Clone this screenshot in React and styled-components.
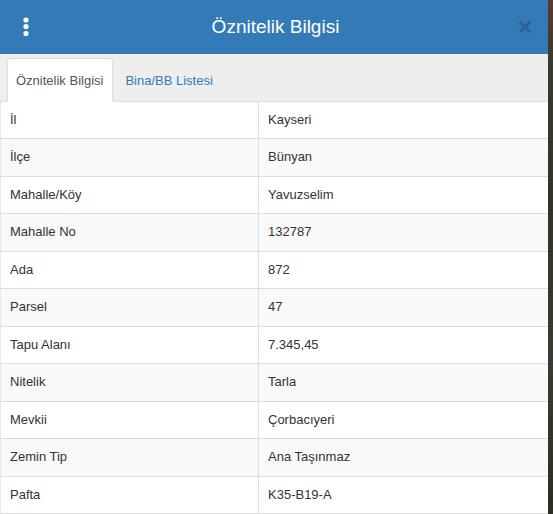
import React, { useState } from 'react'
import styled, { createGlobalStyle } from 'styled-components'

const rows = [
    ['İl', 'Kayseri'],
    ['İlçe', 'Bünyan'],
    ['Mahalle/Köy', 'Yavuzselim'],
    ['Mahalle No', '132787'],
    ['Ada', '872'],
    ['Parsel', '47'],
    ['Tapu Alanı', '7.345,45'],
    ['Nitelik', 'Tarla'],
    ['Mevkii', 'Çorbacıyeri'],
    ['Zemin Tip', 'Ana Taşınmaz'],
    ['Pafta', 'K35-B19-A'],
]

export default function App() {
    const [tab, setTab] = useState(0)

    return (
        <>
            <GlobalStyle />
            <Screen>
                <Panel>
                    <Header>
                        <MenuButton aria-label="menu">
                            <svg width="8" height="20" viewBox="0 0 8 20">
                                <circle cx="4" cy="3" r="2.6" fill="#fff" />
                                <circle cx="4" cy="9.5" r="2.6" fill="#fff" />
                                <circle cx="4" cy="16.5" r="2.6" fill="#fff" />
                            </svg>
                        </MenuButton>
                        <Title>Öznitelik Bilgisi</Title>
                        <CloseButton aria-label="close">
                            <svg width="12" height="12" viewBox="0 0 12 12">
                                <path d="M1.5 1.5 L10.5 10.5 M10.5 1.5 L1.5 10.5" stroke="#2c618f" strokeWidth="3" strokeLinecap="round" />
                            </svg>
                        </CloseButton>
                    </Header>
                    <Tabs>
                        <Tab $active={tab === 0} onClick={() => setTab(0)}>Öznitelik Bilgisi</Tab>
                        <Tab $active={tab === 1} onClick={() => setTab(1)}>Bina/BB Listesi</Tab>
                    </Tabs>
                    <Table>
                        <tbody>
                            {rows.map(([key, value]) => (
                                <tr key={key}>
                                    <Cell $first>{key}</Cell>
                                    <Cell>{value}</Cell>
                                </tr>
                            ))}
                        </tbody>
                    </Table>
                </Panel>
                <MapEdge />
            </Screen>
        </>
    )
}

const GlobalStyle = createGlobalStyle`
    html, body {
        margin: 0;
        padding: 0;
        background: #2b2f24;
    }
    * {
        box-sizing: border-box;
    }
`

const Screen = styled.div`
    display: flex;
    width: 553px;
    height: 514px;
    overflow: hidden;
    font-family: "Liberation Sans", Arial, sans-serif;
`

const Panel = styled.div`
    width: 548px;
    flex-shrink: 0;
    background: #fff;
    display: flex;
    flex-direction: column;
`

const MapEdge = styled.div`
    flex: 1;
    background: linear-gradient(180deg, #5a3a34 0%, #3a3a2e 12%, #2f3526 40%, #3a3b30 70%, #2a2e24 100%);
`

const Header = styled.div`
    height: 54px;
    background: #337ab7;
    display: flex;
    align-items: center;
    padding: 0 17px 0 22px;
`

const MenuButton = styled.div`
    width: 8px;
    height: 20px;
    display: flex;
    margin-top: -1px;
`

const Title = styled.div`
    flex: 1;
    text-align: center;
    color: #fff;
    font-size: 19px;
    padding-left: 2px;
`

const CloseButton = styled.div`
    width: 12px;
    height: 12px;
    display: flex;
    opacity: 0.95;
`

const Tabs = styled.div`
    height: 48px;
    background: #eee;
    display: flex;
    align-items: flex-end;
    padding-left: 7px;
    border-bottom: 1px solid #ddd;
`

const Tab = styled.div`
    height: 44px;
    margin-bottom: -1px;
    margin-right: 3px;
    display: flex;
    align-items: center;
    padding: 0 9px 0 8px;
    font-size: 13px;
    cursor: pointer;
    border: 1px solid ${p => (p.$active ? '#ddd' : 'transparent')};
    border-bottom-color: ${p => (p.$active ? '#fff' : 'transparent')};
    border-radius: 3px 3px 0 0;
    background: ${p => (p.$active ? '#fff' : 'transparent')};
    color: ${p => (p.$active ? '#555' : '#337ab7')};
    & + & {
        padding-left: 8px;
    }
`

const Table = styled.table`
    width: 100%;
    border-collapse: collapse;
    font-size: 13px;
    color: #333;

    tr:nth-child(even) {
        background: #f9f9f9;
    }
`

const Cell = styled.td`
    width: ${p => (p.$first ? '258px' : 'auto')};
    padding: 8px 9px;
    line-height: 20.45px;
    border: 1px solid #ddd;
    border-top: 0;
    border-right: ${p => (p.$first ? '1px solid #ddd' : '0')};
    border-left: ${p => (p.$first ? '1px solid #e8e8e8' : '0')};
`
